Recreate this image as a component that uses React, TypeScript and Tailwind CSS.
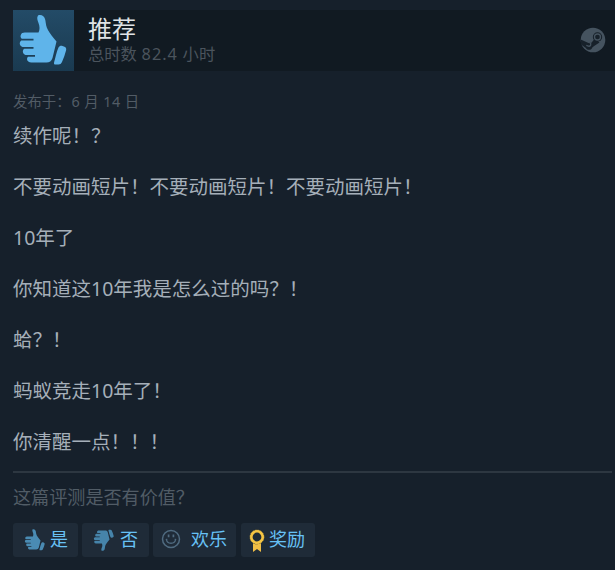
import type { ReactNode } from 'react';

const LINES = [
  '续作呢！？',
  '不要动画短片！不要动画短片！不要动画短片！',
  '10年了',
  '你知道这10年我是怎么过的吗？！',
  '蛤？！',
  '蚂蚁竞走10年了！',
  '你清醒一点！！！',
];

export default function App() {
  return (
    <div className="w-[615px] h-[570px] overflow-hidden bg-[#16202b] pt-[10px] font-['Noto_Sans','Noto_Sans_CJK_SC',sans-serif]">
      <header className="ml-[13px] flex h-[61px] bg-[#111a22]">
        <div className="h-[61px] w-[61px] shrink-0 bg-linear-to-b from-[#234b67] to-[#1a3a50]">
          <ThumbIcon className="h-[61px] w-[61px] text-[#5fb4ea]" />
        </div>
        <div className="ml-[14px] flex-1">
          <h1 className="mt-[5px] h-[27px] text-[24px] leading-[28px] text-[#dfe3e6]">推荐</h1>
          <p className="h-[24px] text-[16.3px] leading-[24px] text-[#4b545d]">
            总时数 <span className="mx-[0.5px] tracking-[1px]">82.4</span> 小时
          </p>
        </div>
        <SteamIcon className="mr-[9px] mt-[17px] h-[26px] w-[26px]" />
      </header>

      <main className="ml-[13px]">
        <p className="mt-[20px] h-[20px] text-[14.4px] leading-[21px] text-[#525c66]">
          发布于：<span className="ml-[1px] tracking-[0.4px]">6 月 14 日</span>
        </p>
        <div className="mt-[12px] flex flex-col gap-[25px] text-[19.5px] leading-[26px] text-[#a5afb9]">
          {LINES.map((line) => (
            <p key={line} className="h-[26px] whitespace-nowrap">{line}</p>
          ))}
        </div>

        <hr className="mt-[16px] mr-[3px] border-t-2 border-[#2d3741]" />
        <p className="mt-[12px] h-[24px] text-[18.1px] leading-[24px] text-[#515c66]">这篇评测是否有价值？</p>

        <div className="mt-[14px] flex">
          <Button className="w-[65px] pl-[9px]" icon={<ThumbIcon className="h-[26px] w-[26px] text-[#4a8bb3]" />} label="是" gap="ml-[2px]" />
          <Button className="ml-[4px] w-[67px] pl-[9px]" icon={<ThumbIcon className="h-[26px] w-[26px] -scale-y-100 text-[#4684aa]" />} label="否" gap="ml-[3px]" />
          <Button className="ml-[4px] w-[83px] pl-[8px]" icon={<SmileIcon />} label="欢乐" gap="ml-[10px]" />
          <Button className="ml-[5px] w-[74px] pl-[8px]" icon={<AwardIcon />} label="奖励" gap="ml-[4px]" />
        </div>
      </main>
    </div>
  );
}

type ButtonProps = { className: string; icon: ReactNode; label: string; gap: string };

function Button({ className, icon, label, gap }: ButtonProps) {
  return (
    <button className={`flex h-[34px] shrink-0 items-center rounded-[3px] bg-[#1f2b38] ${className}`}>
      {icon}
      <span className={`mb-[2px] whitespace-nowrap text-[18px] leading-[30px] text-[#67c1f5] ${gap}`}>{label}</span>
    </button>
  );
}

function ThumbIcon({ className }: { className: string }) {
  return (
    <svg viewBox="0 0 61 61" fill="currentColor" className={className}>
      <path d="M25 5.5c3-1.4 6.5.5 7.3 4.5.7 4 .8 7 2.8 10.3C37.3 24 40 27.500 43.500 31.500L39.500 48c-1 3-3 4.500-6 4.500H18.500c-2.500 0-4.500-1.400-4.500-3.500 0-1 .4-1.700 1-2.300H22v-1.800h-9.500c-2-.7-3-2.200-2.600-4.100.2-.9.7-1.500 1.400-2H20.500V37H9.500c-2-.7-3.100-2.300-2.700-4.200.2-1 .7-1.700 1.500-2.200H20.500v-1.900H8.800c-1.200-.9-1.600-2.300-1-3.800.6-1.600 2-2.400 4-2.400H25.500c1.500-3 1.300-6 0-9.500-1-2.700-2-5.500-.5-7.500z" />
      <path d="M45.500 37.500c1-1.800 2.400-2.200 4-1.600l2 .9c1.500.7 2 1.800 1.600 3.500-1 4-2.400 8-4.100 11.700-.8 1.700-1.800 2.500-3.500 2.500h-3c-1.300 0-1.800-.9-1.400-2.300 1.500-5 2.300-10 4.400-14.700z" />
    </svg>
  );
}

function SteamIcon({ className }: { className: string }) {
  return (
    <svg viewBox="0 0 26 26" className={className}>
      <circle cx="13" cy="13" r="12.300" fill="#45535f" />
      <path d="M.7 12.500 8.500 16l3-.2 3.300-4.300 4.700 4-5 3.300-2 1.500c-.8 3-5 3.600-6.600.6L1 17.500z" fill="#17212a" />
      <circle cx="17.500" cy="10" r="4.700" fill="#17212a" />
      <circle cx="17.500" cy="10" r="3" fill="none" stroke="#45535f" strokeWidth="1.300" />
      <path d="m6.300 18.300 2 .8c2.500.7 3.500-2.500 1.300-3.400" fill="none" stroke="#45535f" strokeWidth="1.300" />
    </svg>
  );
}

function SmileIcon() {
  return (
    <svg viewBox="0 0 20 20" fill="none" stroke="#506b80" className="mb-[2px] h-[20px] w-[20px]">
      <circle cx="10" cy="10" r="8.500" strokeWidth="1.500" />
      <path d="M5.500 10.500c.5 5 8.500 5 9 0M4.800 10.800l1.500-.6M15.200 10.800l-1.500-.6" strokeWidth="1.300" />
      <path d="M7.600 5.500v2.800M12.400 5.500v2.800" strokeWidth="1.700" />
    </svg>
  );
}

function AwardIcon() {
  return (
    <svg viewBox="0 0 16 24" className="mt-[1px] h-[24px] w-[16px]">
      <path d="M4 13h8v10l-4-3-4 3z" fill="#f0bd45" />
      <circle cx="8" cy="8" r="7.300" fill="#1f2b38" />
      <circle cx="8" cy="8" r="5.700" fill="none" stroke="#f5c443" strokeWidth="2.600" />
      <circle cx="8" cy="8" r="6.800" fill="none" stroke="#f5c443" strokeWidth="1" strokeDasharray="1.700 1" />
    </svg>
  );
}
